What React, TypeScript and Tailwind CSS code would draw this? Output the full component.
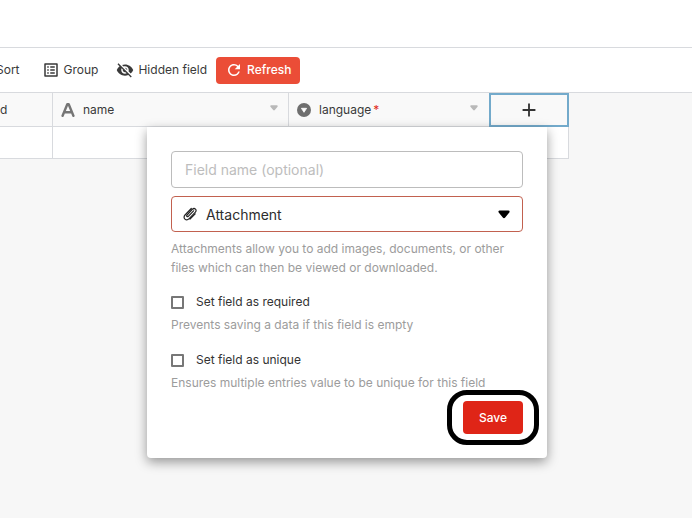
import { useState, type ReactNode } from "react";
import { MdListAlt, MdVisibilityOff, MdRefresh, MdAdd } from "react-icons/md";

function LetterIcon() {
  return (
    <svg viewBox="0 0 14 14" className="h-[14px] w-[14px] shrink-0" fill="none" stroke="#757575" strokeWidth="2.4" strokeLinecap="round" strokeLinejoin="round" aria-hidden="true">
      <path d="M1.6 12.8 6.3 1.3h1.4l4.7 11.5M3.6 9.3h6.8" />
    </svg>
  );
}

function SelectIcon() {
  return (
    <svg viewBox="0 0 14 14" className="h-[14px] w-[14px] shrink-0" aria-hidden="true">
      <circle cx="7" cy="7" r="7" fill="#6f6f6f" />
      <path d="M4.400 5.300h5.200L7 9.300z" fill="#fff" stroke="#fff" strokeWidth="0.8" strokeLinejoin="round" />
    </svg>
  );
}

function ClipIcon({ className }: { className: string }) {
  return (
    <svg viewBox="0 0 15 14" className={className} fill="none" stroke="currentColor" strokeWidth="1.2" strokeLinecap="round" strokeLinejoin="round" aria-hidden="true">
      <path d="M10.6 3.8 5.3 9.3c-1 1-2.2-.2-1.3-1.2L9.3 2.4c2.2-2.2 5.2.5 3.1 2.8L6.2 11.6c-3 3-7-.5-4.2-3.6L8.300 1.500" />
      <path d="M12.200 6.900 7 12" />
    </svg>
  );
}

function Caret({ className }: { className: string }) {
  return (
    <svg viewBox="0 0 12 9" className={className} fill="currentColor" aria-hidden="true">
      <path d="M1.6.5h8.8c1.1 0 1.6 1.2.9 2L7.2 7.6c-.7.9-1.7.9-2.4 0L.7 2.5C0 1.7.5.5 1.6.5z" />
    </svg>
  );
}

function ToolButton({ icon, children }: { icon?: ReactNode; children: ReactNode }) {
  return (
    <button type="button" className="flex shrink-0 items-center gap-1 whitespace-nowrap text-[12px] text-[#3a3a3a]">
      {icon}
      {children}
    </button>
  );
}

function Option({ id, label, hint }: { id: string; label: string; hint: string }) {
  const [on, setOn] = useState(false);
  return (
    <div className="mb-4">
      <div className="flex items-center gap-3">
        <input
          id={id}
          type="checkbox"
          checked={on}
          onChange={() => setOn(!on)}
          aria-describedby={id + "-hint"}
          className="h-[13px] w-[13px] appearance-none rounded-[1px] border-2 border-[#777] bg-white checked:bg-[#df2517]"
        />
        <label htmlFor={id} className="text-[12px] leading-5 text-[#333]">{label}</label>
      </div>
      <p id={id + "-hint"} className="mt-[3px] text-[12px] leading-[19px] text-[#9c9c9c]">{hint}</p>
    </div>
  );
}

function FieldPopover() {
  return (
    <form
      onSubmit={(e) => e.preventDefault()}
      className="absolute top-full right-5 z-10 mt-[2px] w-[400px] rounded-b-[4px] bg-white p-6 text-left font-normal shadow-[0_4px_12px_rgba(0,0,0,0.4)]"
    >
      <input
        type="text"
        aria-label="Field name"
        placeholder="Field name (optional)"
        className="block h-[37px] w-full rounded-[4px] border border-[#bcbcbc] px-[13px] text-[14px] text-[#333] placeholder:text-[#bdbdbd]"
      />
      <div className="relative mt-2">
        <select aria-label="Field type" defaultValue="Attachment" className="block h-9 w-full appearance-none rounded-[4px] border border-[#c2614f] bg-white pr-8 pl-[34px] text-[14px] text-[#2d2d2d]">
          <option>Attachment</option>
        </select>
        <ClipIcon className="pointer-events-none absolute top-[11px] left-3 h-[14px] w-[15px] text-[#222]" />
        <Caret className="pointer-events-none absolute top-[14px] right-[13px] h-[9px] w-3 text-black" />
      </div>
      <p className="mt-[7px] mb-[15px] text-[12px] leading-[19px] text-[#9c9c9c]">
        Attachments allow you to add images, documents, or other files which can then be viewed or downloaded.
      </p>
      <Option id="required" label="Set field as required" hint="Prevents saving a data if this field is empty" />
      <Option id="unique" label="Set field as unique" hint="Ensures multiple entries value to be unique for this field" />
      <div className="-mt-[18px] -mr-4 -mb-[11px] flex justify-end">
        <div className="rounded-[20px] border-5 border-black px-[11px] py-[6px]">
          <button type="submit" className="block h-[33px] w-[60px] rounded-[4px] bg-[#df2517] text-[12px] font-medium text-white">
            Save
          </button>
        </div>
      </div>
    </form>
  );
}

export default function App() {
  return (
    <div className="min-h-screen overflow-hidden bg-[#f7f7f7] font-['Inter','Liberation_Sans',sans-serif]">
      <header className="h-12 border-b border-[#d8dade] bg-white" />
      <nav aria-label="Table tools" className="flex h-11 items-center bg-white">
        <div className="-ml-1 flex gap-[18px]">
          <ToolButton>Sort</ToolButton>
          <span className="ml-1 flex gap-[18px]">
            <ToolButton icon={<MdListAlt className="h-[18px] w-[18px]" />}>Group</ToolButton>
            <ToolButton icon={<MdVisibilityOff className="h-[18px] w-[18px]" />}>Hidden field</ToolButton>
          </span>
        </div>
        <button type="button" className="ml-[9px] flex h-[27px] items-center gap-1 rounded-[4px] bg-[#eb4d37] px-[9px] text-[12px] font-medium text-white">
          <MdRefresh className="h-[18px] w-[18px]" />
          Refresh
        </button>
      </nav>
      <div className="border-t border-[#d8dade]">
        <table className="w-[569px] table-fixed border-separate border-spacing-0 text-[12px] text-[#3a3a3a]">
          <colgroup>
            <col className="w-[53px]" />
            <col className="w-[236px]" />
            <col className="w-[200px]" />
            <col className="w-20" />
          </colgroup>
          <thead>
            <tr className="h-[34px] bg-[#f9f9f9] [&>th]:p-0 [&>th]:font-normal">
              <th className="border-r border-b border-[#d8dade] text-left">d</th>
              <th className="border-r border-b border-[#d8dade]">
                <div className="flex items-center gap-2 pr-[10px] pl-2">
                  <LetterIcon />
                  name
                  <Caret className="mb-[3px] ml-auto h-[6px] w-[8px] text-[#b9b9b9]" />
                </div>
              </th>
              <th className="border-b border-[#d8dade]">
                <div className="flex items-center gap-2 pr-[11px] pl-2">
                  <SelectIcon />
                  <span>language<span className="ml-[2px] text-[#e02b20]">*</span></span>
                  <Caret className="mb-[3px] ml-auto h-[6px] w-[8px] text-[#b9b9b9]" />
                </div>
              </th>
              <th className="relative border-2 border-[#73aacb]">
                <button type="button" aria-label="Add field" className="flex h-[30px] w-full items-center justify-center">
                  <MdAdd className="h-[22px] w-[22px] text-[#333]" />
                </button>
                <FieldPopover />
              </th>
            </tr>
          </thead>
          <tbody>
            <tr className="h-8 bg-white [&>td]:border-r [&>td]:border-b [&>td]:border-[#d8dade]">
              <td />
              <td />
              <td />
              <td />
            </tr>
          </tbody>
        </table>
      </div>
    </div>
  );
}
